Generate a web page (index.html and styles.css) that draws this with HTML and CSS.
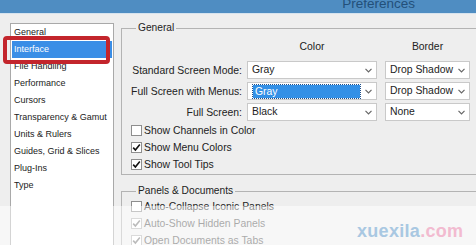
FILE: index.html
```html
<!DOCTYPE html>
<html lang="en">

<head>
    <meta charset="UTF-8">
    <meta name="viewport" content="width=device-width, initial-scale=1.0">
    <title>Preferences</title>
    <link rel="stylesheet" href="styles.css">
</head>

<body>
    <div class="titlebar"><span>Preferences</span></div>

    <div class="window">
        <ul class="nav">
            <li>General</li>
            <li class="active">Interface</li>
            <li>File Handling</li>
            <li>Performance</li>
            <li>Cursors</li>
            <li>Transparency &amp; Gamut</li>
            <li>Units &amp; Rulers</li>
            <li>Guides, Grid &amp; Slices</li>
            <li>Plug-Ins</li>
            <li>Type</li>
        </ul>

        <div class="main">
            <fieldset class="group group-general">
                <legend>General</legend>
                <div class="modes">
                    <span></span>
                    <span class="col-head">Color</span>
                    <span class="col-head col-border">Border</span>

                    <label>Standard Screen Mode:</label>
                    <div class="select"><span class="val">Gray</span><svg class="arrow" width="7" height="5" viewBox="0 0 7 5"><path d="M0.5 0.8 L3.5 3.8 L6.5 0.8" fill="none" stroke="#666" stroke-width="1.2"/></svg></div>
                    <div class="select col-border"><span class="val">Drop Shadow</span><svg class="arrow" width="7" height="5" viewBox="0 0 7 5"><path d="M0.5 0.8 L3.5 3.8 L6.5 0.8" fill="none" stroke="#666" stroke-width="1.2"/></svg></div>

                    <label>Full Screen with Menus:</label>
                    <div class="select"><span class="val focused">Gray</span><svg class="arrow" width="7" height="5" viewBox="0 0 7 5"><path d="M0.5 0.8 L3.5 3.8 L6.5 0.8" fill="none" stroke="#666" stroke-width="1.2"/></svg></div>
                    <div class="select col-border"><span class="val">Drop Shadow</span><svg class="arrow" width="7" height="5" viewBox="0 0 7 5"><path d="M0.5 0.8 L3.5 3.8 L6.5 0.8" fill="none" stroke="#666" stroke-width="1.2"/></svg></div>

                    <label>Full Screen:</label>
                    <div class="select"><span class="val">Black</span><svg class="arrow" width="7" height="5" viewBox="0 0 7 5"><path d="M0.5 0.8 L3.5 3.8 L6.5 0.8" fill="none" stroke="#666" stroke-width="1.2"/></svg></div>
                    <div class="select col-border"><span class="val">None</span><svg class="arrow" width="7" height="5" viewBox="0 0 7 5"><path d="M0.5 0.8 L3.5 3.8 L6.5 0.8" fill="none" stroke="#666" stroke-width="1.2"/></svg></div>
                </div>

                <div class="checks">
                    <div class="check"><span class="box"></span>Show Channels in Color</div>
                    <div class="check"><span class="box"><svg width="9" height="9" viewBox="0 0 9 9"><path d="M1.2 4.6 L3.4 7 L7.8 1.6" fill="none" stroke="#111" stroke-width="1.6"/></svg></span>Show Menu Colors</div>
                    <div class="check"><span class="box"><svg width="9" height="9" viewBox="0 0 9 9"><path d="M1.2 4.6 L3.4 7 L7.8 1.6" fill="none" stroke="#111" stroke-width="1.6"/></svg></span>Show Tool Tips</div>
                </div>
            </fieldset>

            <fieldset class="group group-panels">
                <legend>Panels &amp; Documents</legend>
                <div class="checks">
                    <div class="check"><span class="box"></span>Auto-Collapse Iconic Panels</div>
                    <div class="check disabled"><span class="box"><svg width="9" height="9" viewBox="0 0 9 9"><path d="M1.2 4.6 L3.4 7 L7.8 1.6" fill="none" stroke="#777" stroke-width="1.6"/></svg></span>Auto-Show Hidden Panels</div>
                    <div class="check disabled"><span class="box"><svg width="9" height="9" viewBox="0 0 9 9"><path d="M1.2 4.6 L3.4 7 L7.8 1.6" fill="none" stroke="#777" stroke-width="1.6"/></svg></span>Open Documents as Tabs</div>
                </div>
            </fieldset>
        </div>
    </div>

    <!-- overlays from the screenshot -->
    <div class="red-mark"></div>
    <div class="fade"></div>
    <div class="watermark">xuexila<span>.com</span></div>
</body>

</html>
```

FILE: styles.css
```css
html, body {
    margin: 0;
    height: 100%;
    overflow: hidden;
}

body {
    position: relative;
    background-color: #eeeeee;
    font-family: "Liberation Sans", Arial, sans-serif;
    color: #222222;
}

.titlebar {
    height: 13px;
    background-color: #4f8dc2;
    border-bottom: 1px solid #d6e3ee;
    overflow: hidden;
    display: flex;
    justify-content: flex-end;
    padding-right: 61px;
}

.titlebar span {
    font-size: 13.5px;
    line-height: 14px;
    margin-top: -3px;
    color: #23507a;
}

.window {
    display: flex;
    padding: 8px 0 0 10px;
}

/* left category list */
.nav {
    flex: none;
    list-style: none;
    margin: 1px 0 0 0;
    padding: 0;
    width: 102px;
    height: 260px;
    background-color: #ffffff;
    border: 1px solid #a9a9a9;
    font-size: 9px;
}

.nav li {
    height: 17px;
    line-height: 17px;
    padding-left: 3px;
    white-space: nowrap;
}

.nav li.active {
    background-color: #3a8ee6;
    color: #ffffff;
    margin: 0 1px;
    padding-left: 2px;
}

.main {
    flex: none;
    margin-left: 7px;
    display: flex;
    flex-direction: column;
}

.group {
    margin: 0;
    width: 360px;
    border: 1px solid #b3b3b3;
    padding: 6px 0 1px 9px;
    font-size: 10.4px;
}

.group legend {
    font-size: 10.2px;
    line-height: 12px;
    padding: 0 2px;
    margin-left: 5px;
}

.group-panels {
    margin-top: 10px;
    padding-top: 1px;
}

.modes {
    display: grid;
    grid-template-columns: 116px 130px 93px;
    grid-auto-rows: 18px;
    row-gap: 3px;
    align-items: center;
}

.modes .col-head {
    text-align: center;
    height: 14px;
    line-height: 14px;
    align-self: start;
}

.modes label {
    text-align: right;
    padding-right: 5px;
    white-space: nowrap;
}

.col-border {
    margin-left: 8px;
}

.select {
    height: 18px;
    box-sizing: border-box;
    background-color: #ffffff;
    border: 1px solid #c9c9c9;
    display: flex;
    align-items: center;
    padding: 0 4px 0 4px;
}

.select .val {
    flex: 1;
    line-height: 16px;
    white-space: nowrap;
}

.select .val.focused {
    flex: 0 0 107px;
    height: 13px;
    line-height: 13px;
    margin-left: 1px;
    padding-left: 2px;
    box-sizing: border-box;
    background-color: #3390e6;
    color: #ffffff;
    outline: 1px dotted #20508a;
    margin-right: auto;
}

.select .arrow {
    flex: none;
}

.checks {
    display: flex;
    flex-direction: column;
}

.group-general .checks {
    margin-top: 1px;
}

.check {
    height: 17px;
    display: flex;
    align-items: center;
    white-space: nowrap;
}

.check .box {
    width: 11px;
    height: 11px;
    box-sizing: border-box;
    border: 1px solid #8e8e8e;
    background-color: #ffffff;
    margin-right: 2px;
    display: flex;
    align-items: center;
    justify-content: center;
}

.check.disabled {
    color: #555555;
}

.check.disabled .box {
    border-color: #b5b5b5;
}

.red-mark {
    position: absolute;
    left: 3px;
    top: 36px;
    width: 99px;
    height: 20px;
    border: 4px solid #c3252c;
    border-radius: 4px;
}

.fade {
    position: absolute;
    left: 0;
    right: 0;
    top: 206px;
    bottom: 0;
    background-color: rgba(255, 255, 255, 0.5);
}

.watermark {
    position: absolute;
    left: 357px;
    top: 221px;
    font-size: 18px;
    font-weight: bold;
    letter-spacing: 0.3px;
    color: #a9c8e2;
}

.watermark span {
    color: #f2bbd0;
}
```
